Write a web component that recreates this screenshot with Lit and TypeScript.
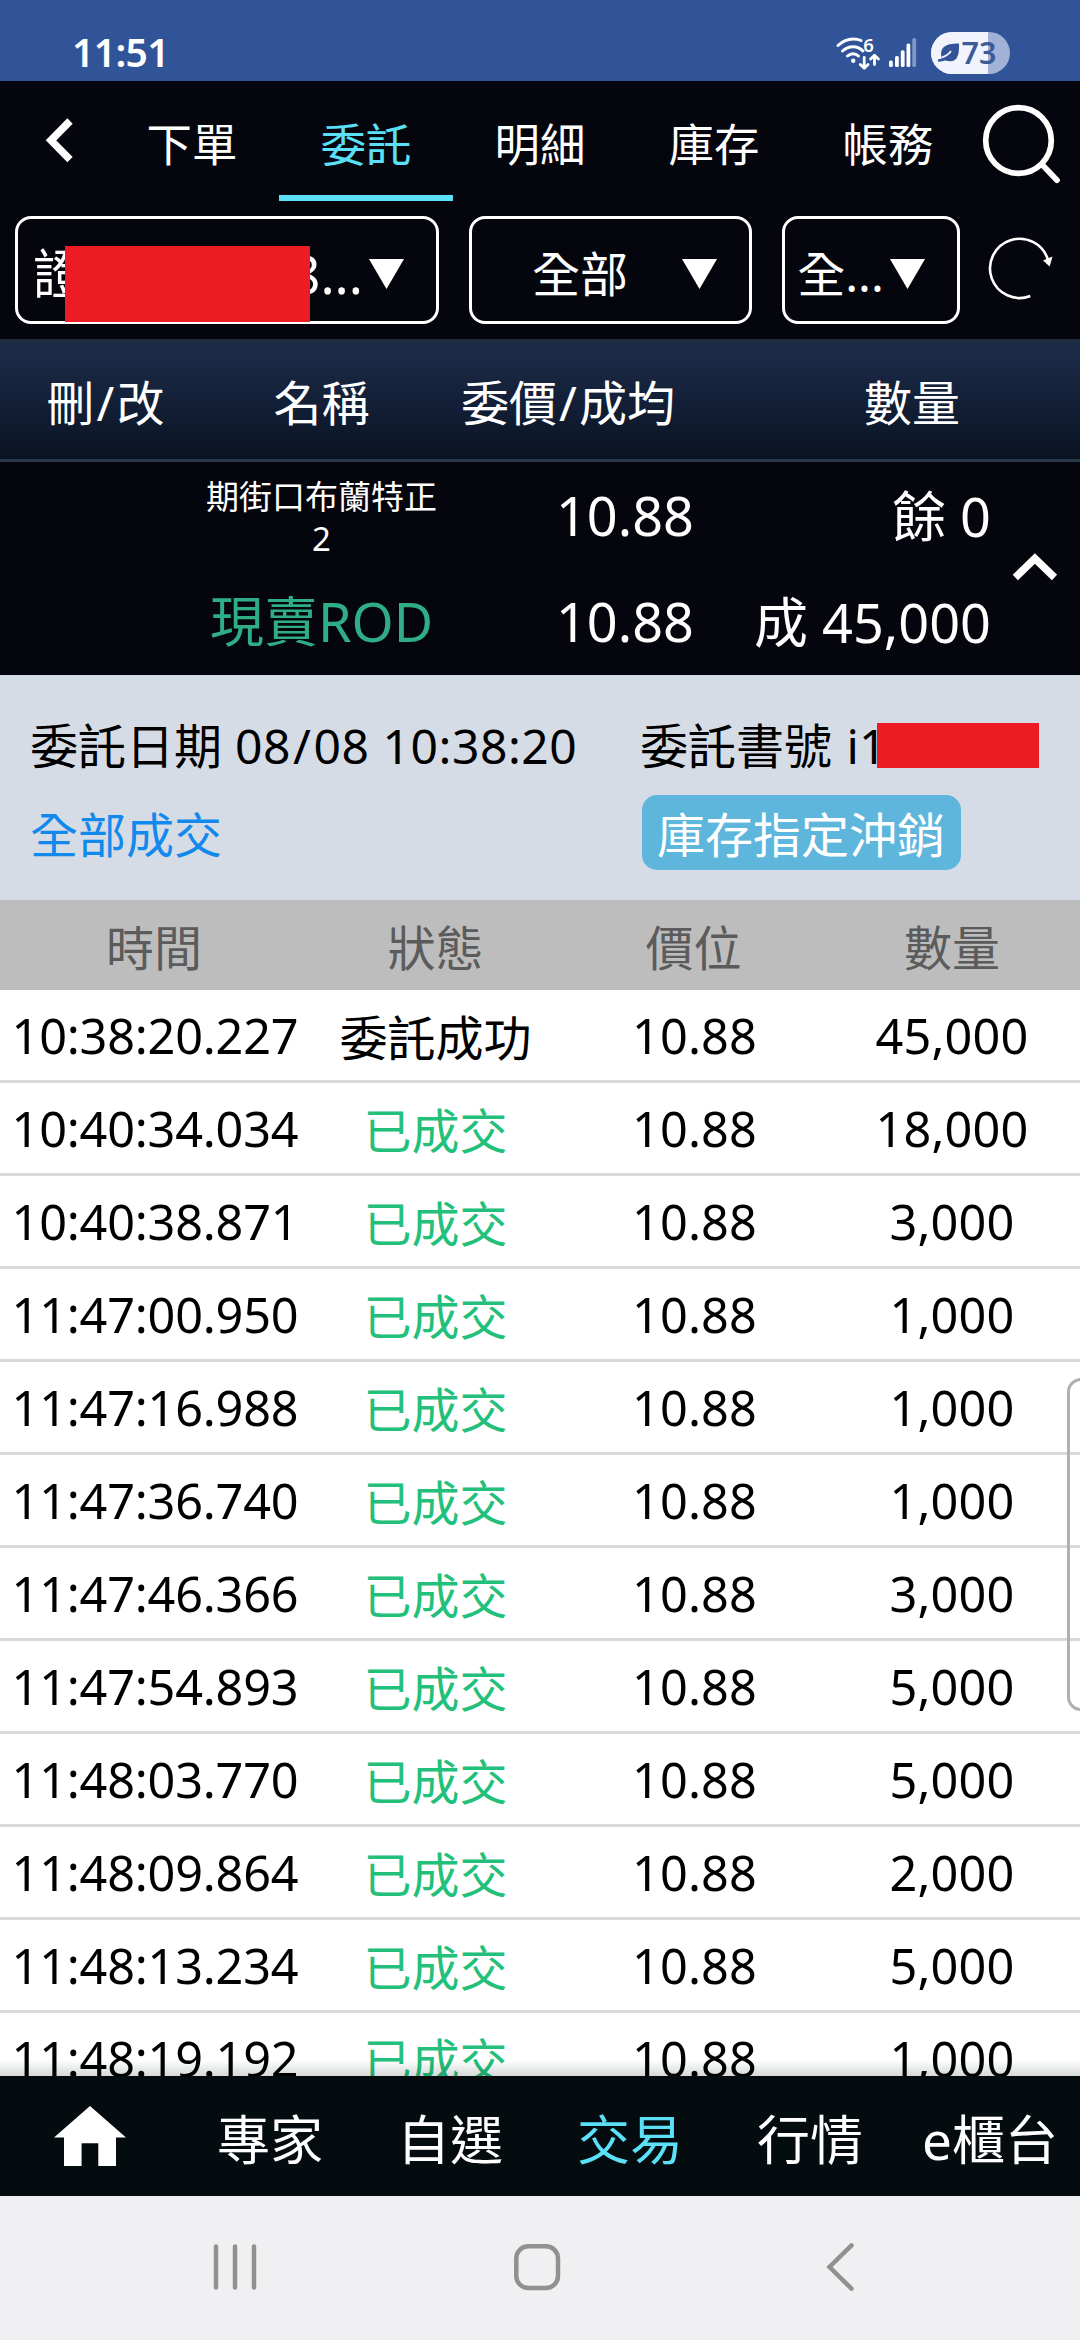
import { LitElement, html, svg, css } from "lit";
import { customElement, property } from "lit/decorators.js";
import { classMap } from "lit/directives/class-map.js";

interface Fill {
  time: string;
  status: string;
  done: boolean;
  price: string;
  qty: string;
}

const FILLS: Fill[] = [
  ["10:38:20.227", "45,000"],
  ["10:40:34.034", "18,000"],
  ["10:40:38.871", "3,000"],
  ["11:47:00.950", "1,000"],
  ["11:47:16.988", "1,000"],
  ["11:47:36.740", "1,000"],
  ["11:47:46.366", "3,000"],
  ["11:47:54.893", "5,000"],
  ["11:48:03.770", "5,000"],
  ["11:48:09.864", "2,000"],
  ["11:48:13.234", "5,000"],
  ["11:48:19.192", "1,000"],
].map(([time, qty], i) => ({
  time,
  qty,
  price: "10.88",
  done: i > 0,
  status: i > 0 ? "已成交" : "委託成功",
}));

const slash = html`<span class="slash">/</span>`;

@customElement("status-bar")
class StatusBar extends LitElement {
  static styles = css`
    :host {
      display: flex;
      justify-content: space-between;
      height: 81px;
      background: #315499;
      color: #fff;
    }
    .clock {
      padding-left: 72px;
      font-size: 39px;
      font-weight: 600;
      line-height: 103px;
      letter-spacing: -0.6px;
    }
    svg {
      display: block;
      margin-right: 60px;
    }
    text {
      font-weight: 600;
    }
  `;
  render() {
    const bars = [
      [889, 60.5],
      [895, 56],
      [900.8, 50.3],
      [906.5, 43.5],
    ];
    return html`
      <div class="clock">11:51</div>
      <svg width="190" height="81" viewBox="830 0 190 81" fill="none">
        <g stroke="#fff" stroke-width="3" stroke-linecap="round">
          <path d="M838 45.5Q845 39 853 39Q858 39 861 40.5" />
          <path d="M842.5 51Q847 46.700 853 46.700Q859 46.700 863 51" />
          <path d="M847.500 56Q850 53.700 853 53.700Q856 53.700 858.500 56" />
        </g>
        <circle cx="853.200" cy="60.700" r="2.200" fill="#fff" />
        <text x="863.200" y="51.500" font-size="18.500" fill="#fff">6</text>
        <g stroke="#fff" stroke-width="2.800" stroke-linecap="round" stroke-linejoin="round">
          <path d="M864.200 57.500V68M860.300 64.500L864.200 68.300L868.100 64.500" />
          <path d="M874.500 64.500V55.500M870.600 59L874.500 55.200L878.400 59" />
        </g>
        ${bars.map(
          ([x, y]) =>
            svg`<rect x=${x} y=${y} width="3.800" height=${67 - y} rx="1.500" fill="#fff" />`
        )}
        <rect x="912.300" y="38" width="3.800" height="29" rx="1.500" fill="#8097c6" />
        <clipPath id="pill"><rect x="931" y="32" width="79" height="42" rx="21" /></clipPath>
        <g clip-path="url(#pill)">
          <rect x="931" y="32" width="79" height="42" fill="#a2b2d6" />
          <rect x="931" y="32" width="57" height="42" fill="#f1f4fc" />
        </g>
        <path
          d="M941.500 58C939.500 48 944 43.500 959 43.500C959.500 56 957 64 945 60.500Z"
          fill="#315499"
        />
        <path d="M939 60.500Q944 60 948 57" stroke="#315499" stroke-width="2.500" stroke-linecap="round" />
        <path d="M941.500 57.500Q948 55.500 951 51" stroke="#f1f4fc" stroke-width="1.800" />
        <text x="961.500" y="63.500" font-size="30.500" fill="#3c5b98">73</text>
      </svg>
    `;
  }
}

@customElement("pick-box")
class PickBox extends LitElement {
  @property() label = "";
  static styles = css`
    :host {
      display: flex;
      align-items: center;
      gap: 6px;
      box-sizing: border-box;
      height: 108px;
      padding: 0 32px 0 12px;
      border: 3px solid #fff;
      border-radius: 16px;
      position: relative;
    }
    .label {
      flex: 1;
      text-align: center;
      white-space: nowrap;
      line-height: 60px;
      padding-top: 7px;
    }
    svg {
      flex: none;
      margin-top: 7px;
    }
  `;
  render() {
    return html`
      <div class="label"><slot>${this.label}</slot></div>
      <svg width="35" height="30" viewBox="0 0 35 30"><path d="M0 0H35L17.500 30Z" fill="#fff" /></svg>
    `;
  }
}

@customElement("app-root")
class AppRoot extends LitElement {
  static styles = css`
    :host {
      display: flex;
      flex-direction: column;
      width: 1080px;
      height: 2340px;
      overflow: hidden;
      position: relative;
      background: #fff;
      color: #000;
      font-family: "Noto Sans", "Noto Sans CJK TC", sans-serif;
      font-size: 48px;
      line-height: 1;
    }
    svg {
      display: block;
    }
    .slash {
      margin: 0 2px;
    }
    .tabs {
      display: flex;
      height: 120px;
      background: #05060d;
      color: #fff;
    }
    .back {
      width: 105px;
    }
    .tab {
      width: 174px;
      height: 114px;
      line-height: 127px;
      text-align: center;
      font-size: 45.400px;
      border-bottom: 6px solid transparent;
    }
    .tab.on {
      color: #5be0f7;
      border-color: #5be0f7;
    }
    .filters {
      display: flex;
      gap: 30px;
      height: 123px;
      padding: 15px 0 0 15px;
      background: #05060d;
      color: #fff;
    }
    .account {
      width: 424px;
      font-size: 53px;
    }
    .market {
      width: 283px;
    }
    .kind {
      width: 178px;
    }
    .masked {
      display: flex;
      justify-content: space-between;
      padding-left: 3px;
    }
    .cover {
      position: absolute;
      background: #ed1c24;
    }
    .cover.acct {
      left: 47px;
      top: 27px;
      width: 245px;
      height: 76px;
    }
    .cover.serial {
      left: 237px;
      top: 17px;
      width: 162px;
      height: 45px;
    }
    .head {
      display: grid;
      grid-template-columns: 211px 221px 272px 1fr;
      height: 123px;
      box-sizing: border-box;
      border-top: 3px solid #1f2e3f;
      border-bottom: 3px solid #26384a;
      background: linear-gradient(#1c2c48, #14213a 45%, #0a1322);
      color: #fff;
      line-height: 121px;
      text-align: center;
    }
    .head .last {
      padding-left: 40px;
    }
    .order {
      display: grid;
      grid-template-columns: 211px 221px 262px 297px 89px;
      grid-template-rows: 106px 107px;
      height: 213px;
      background: #05060d;
      color: #fff;
      font-size: 54px;
      line-height: 106px;
      white-space: nowrap;
    }
    .name {
      grid-column: 2;
      display: flex;
      flex-direction: column;
      align-items: center;
      padding-top: 14px;
      font-size: 33px;
      line-height: 42px;
    }
    .side {
      grid-column: 2;
      display: flex;
      justify-content: center;
      color: #2fae86;
    }
    .num {
      text-align: right;
    }
    .qty {
      padding-top: 1px;
    }
    .toggle {
      grid-column: 5;
      grid-row: 1 / 3;
    }
    .detail {
      display: grid;
      grid-template-columns: 610px 1fr;
      grid-template-rows: 75px 75px;
      row-gap: 14px;
      height: 225px;
      box-sizing: border-box;
      padding: 31px 0 0 30px;
      background: #d6dce5;
      line-height: 80px;
      white-space: nowrap;
    }
    .date {
      letter-spacing: 0.550px;
    }
    .code {
      margin-left: 2px;
    }
    .serialno {
      position: relative;
    }
    .allfilled {
      color: #1289ec;
    }
    .offset {
      width: 319px;
      margin-left: 1.500px;
      border-radius: 15px;
      background: #5fb6dc;
      color: #fff;
      text-align: center;
    }
    .row,
    .cols {
      display: grid;
      grid-template-columns: 308px 255px 261px 256px;
      height: 90px;
      line-height: 95px;
      text-align: center;
      flex: none;
    }
    .cols {
      background: #bdbdbd;
      color: #5b5b5b;
    }
    .row {
      border-bottom: 3px solid #d9d9db;
    }
    .digits {
      font-size: 48.600px;
      line-height: 91px;
      letter-spacing: 0.200px;
    }
    .time {
      letter-spacing: -0.200px;
      padding-left: 2px;
    }
    .price {
      padding-left: 2px;
    }
    .done {
      color: #22c07a;
    }
    .fills {
      height: 1086px;
      overflow: hidden;
      position: relative;
    }
    .fade {
      position: absolute;
      left: 0;
      right: 0;
      bottom: 0;
      height: 16px;
      background: linear-gradient(rgba(0, 20, 20, 0), rgba(0, 20, 20, 0.160));
    }
    .edge {
      position: absolute;
      left: 1067px;
      top: 1378px;
      width: 40px;
      height: 333px;
      box-sizing: border-box;
      border: 3px solid #b0b0b0;
      border-radius: 14px;
    }
    .menu {
      display: grid;
      grid-template-columns: repeat(6, 180px);
      height: 120px;
      background: #040c10;
      color: #fff;
      font-size: 53px;
      line-height: 128px;
      text-align: center;
    }
    .menu .on {
      color: #5be0f7;
    }
    .system {
      height: 144px;
      background: #f0f0f2;
    }
  `;

  render() {
    return html`
      <status-bar></status-bar>
      <nav class="tabs">
        <svg class="back" width="105" height="120" viewBox="0 81 105 120" fill="none">
          <path d="M70 121L51 140.300L70 159.600" stroke="#fff" stroke-width="7.500" />
        </svg>
        ${["下單", "委託", "明細", "庫存", "帳務"].map(
          (t) => html`<div class=${classMap({ tab: true, on: t === "委託" })}>${t}</div>`
        )}
        <svg width="105" height="120" viewBox="975 81 105 120" fill="none" stroke="#fff" stroke-width="5.700">
          <circle cx="1018.500" cy="140.500" r="32.800" />
          <path d="M1042 164.500L1057 180.300" stroke-linecap="round" />
        </svg>
      </nav>
      <div class="filters">
        <pick-box class="account">
          <div class="masked"><span>證</span><span>8...</span></div>
          <div class="cover acct"></div>
        </pick-box>
        <pick-box class="market" label="全部"></pick-box>
        <pick-box class="kind" label="全..."></pick-box>
        <svg width="80" height="108" viewBox="990 216 80 108" fill="none" overflow="visible">
          <path d="M1030.300 296A29.600 29.600 0 1 1 1048 260" stroke="#fff" stroke-width="2.600" />
          <path d="M1043 260.500L1052.500 256.500L1049.700 266.500Z" fill="#fff" />
        </svg>
      </div>
      <div class="head">
        <div>刪${slash}改</div>
        <div>名稱</div>
        <div>委價${slash}成均</div>
        <div class="last">數量</div>
      </div>
      <section class="order">
        <div class="name"><span>期街口布蘭特正</span><span>2</span></div>
        <div class="num">10.88</div>
        <div class="num qty">餘 0</div>
        <div class="side">現賣ROD</div>
        <div class="num">10.88</div>
        <div class="num qty">成 45,000</div>
        <svg class="toggle" width="89" height="213" viewBox="991 462 89 213" fill="none">
          <path d="M1015.300 577.500L1034.900 558.500L1054.500 577.500" stroke="#fff" stroke-width="7.500" />
        </svg>
      </section>
      <section class="detail">
        <div>委託日期<span class="date"> 08${slash}08 10:38:20</span></div>
        <div class="serialno">委託書號<span class="code"> i1</span><span class="cover serial"></span></div>
        <div class="allfilled">全部成交</div>
        <div class="offset">庫存指定沖銷</div>
      </section>
      <div class="cols"><div>時間</div><div>狀態</div><div>價位</div><div>數量</div></div>
      <section class="fills">
        ${FILLS.map(
          (f) => html`<div class="row">
            <div class="digits time">${f.time}</div>
            <div class=${classMap({ done: f.done })}>${f.status}</div>
            <div class="digits price">${f.price}</div>
            <div class="digits">${f.qty}</div>
          </div>`
        )}
        <div class="fade"></div>
      </section>
      <nav class="menu">
        <svg width="180" height="120" viewBox="0 2076 180 120">
          <path
            d="M90 2106L126 2137.500H116V2166H98.300V2143.300H81.600V2166H64V2137.500H54Z"
            fill="#fff"
          />
        </svg>
        <div>專家</div>
        <div>自選</div>
        <div class="on">交易</div>
        <div>行情</div>
        <div>e櫃台</div>
      </nav>
      <svg
        class="system"
        width="1080"
        height="144"
        viewBox="0 2196 1080 144"
        fill="none"
        stroke="#919191"
        stroke-width="4.500"
        stroke-linecap="round"
      >
        <path d="M216 2246.500V2287.500M235 2246.500V2287.500M254 2246.500V2287.500" />
        <rect x="516.300" y="2246.300" width="41.700" height="41.700" rx="12" />
        <path d="M851.500 2245.300L829.500 2267L851.500 2288.700" />
      </svg>
      <div class="edge"></div>
    `;
  }
}
